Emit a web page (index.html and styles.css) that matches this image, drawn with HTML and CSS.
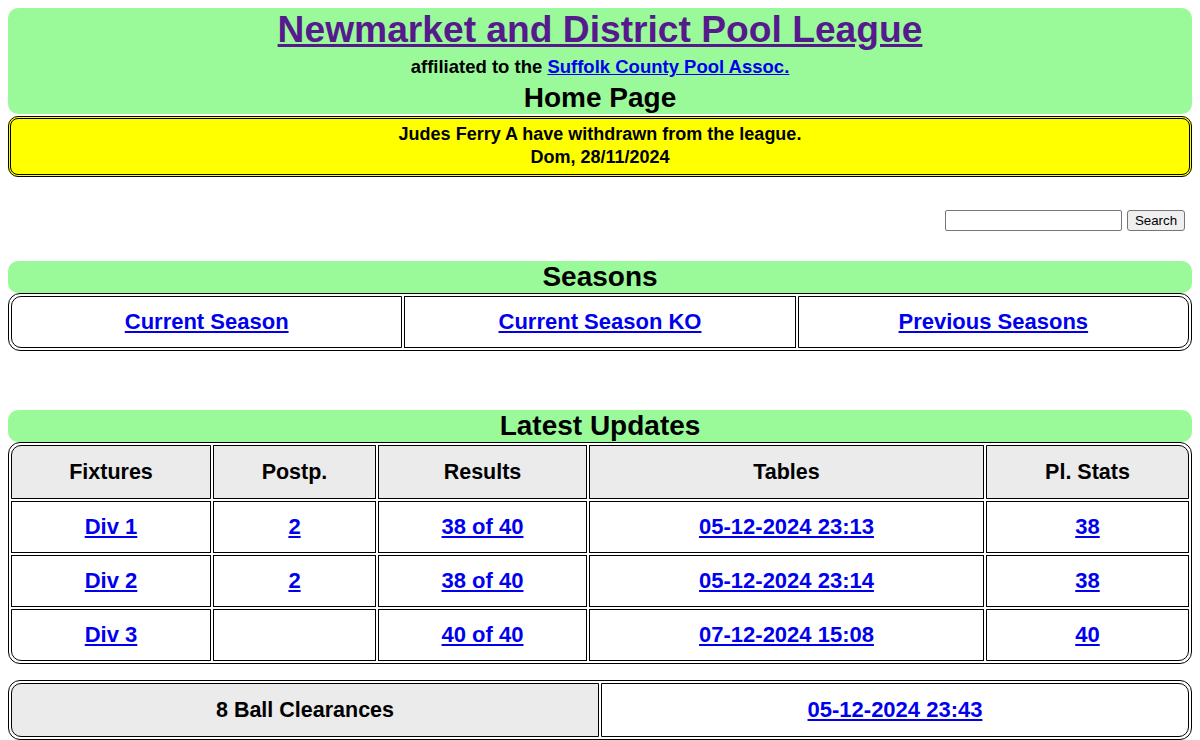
FILE: index.html
```html
<!DOCTYPE html>
<html>
<head>
<meta charset="utf-8">
<title>Newmarket and District Pool League</title>
<link rel="stylesheet" href="styles.css">
</head>
<body>
<div class="masthead">
  <h1 class="site-title"><a class="title-link" href="#">Newmarket and District Pool League</a></h1>
  <p class="affil">affiliated to the <a class="link" href="#">Suffolk County Pool Assoc.</a></p>
  <h2 class="page-name">Home Page</h2>
</div>
<div class="notice">
  <div class="notice-line">Judes Ferry A have withdrawn from the league.</div>
  <div class="notice-line">Dom, 28/11/2024</div>
</div>
<form class="search">
  <input class="search-input" type="text">
  <button class="search-btn" type="button">Search</button>
</form>

<div class="bar bar-seasons">Seasons</div>
<table class="grid">
  <tr>
    <td class="cell cell-third cell-tl cell-bl"><a class="link" href="#">Current Season</a></td>
    <td class="cell cell-third"><a class="link" href="#">Current Season KO</a></td>
    <td class="cell cell-third cell-tr cell-br"><a class="link" href="#">Previous Seasons</a></td>
  </tr>
</table>

<div class="bar bar-updates">Latest Updates</div>
<table class="grid">
  <tr>
    <th class="cell head w1 cell-tl">Fixtures</th>
    <th class="cell head w2">Postp.</th>
    <th class="cell head w3">Results</th>
    <th class="cell head w4">Tables</th>
    <th class="cell head w5 cell-tr">Pl. Stats</th>
  </tr>
  <tr>
    <td class="cell"><a class="link" href="#">Div 1</a></td>
    <td class="cell"><a class="link" href="#">2</a></td>
    <td class="cell"><a class="link" href="#">38 of 40</a></td>
    <td class="cell"><a class="link" href="#">05-12-2024 23:13</a></td>
    <td class="cell"><a class="link" href="#">38</a></td>
  </tr>
  <tr>
    <td class="cell"><a class="link" href="#">Div 2</a></td>
    <td class="cell"><a class="link" href="#">2</a></td>
    <td class="cell"><a class="link" href="#">38 of 40</a></td>
    <td class="cell"><a class="link" href="#">05-12-2024 23:14</a></td>
    <td class="cell"><a class="link" href="#">38</a></td>
  </tr>
  <tr>
    <td class="cell cell-bl"><a class="link" href="#">Div 3</a></td>
    <td class="cell"></td>
    <td class="cell"><a class="link" href="#">40 of 40</a></td>
    <td class="cell"><a class="link" href="#">07-12-2024 15:08</a></td>
    <td class="cell cell-br"><a class="link" href="#">40</a></td>
  </tr>
</table>

<table class="grid grid-clear">
  <tr>
    <th class="cell head cell-half cell-tl cell-bl">8 Ball Clearances</th>
    <td class="cell cell-half cell-tr cell-br cell-tall"><a class="link" href="#">05-12-2024 23:43</a></td>
  </tr>
</table>
</body>
</html>
```
FILE: styles.css
```css
html, body {
  margin: 0;
  padding: 0;
}
body {
  margin: 8px;
  font-family: "Liberation Sans", Arial, sans-serif;
  color: #000;
  background: #fff;
}
.masthead {
  background: #9afa9a;
  border-radius: 10px;
  text-align: center;
  height: 106px;
}
.site-title {
  margin: 0;
  font-size: 37.2px;
  line-height: 42px;
  font-weight: bold;
}
.title-link {
  color: #551a8b;
}
.affil {
  margin: 6px 0 0;
  font-size: 18.5px;
  line-height: 22px;
  font-weight: bold;
}
.page-name {
  margin: 4px 0 0;
  font-size: 28px;
  line-height: 32px;
  font-weight: bold;
}
.link {
  color: #0000ee;
}
.notice {
  margin-top: 2px;
  background: #ffff00;
  border: 3px double #000;
  border-radius: 10px;
  text-align: center;
  font-weight: bold;
  font-size: 18px;
  line-height: 23px;
  padding: 4px 0 5px;
}
.search {
  margin: 33px 0 0;
  display: flex;
  justify-content: flex-end;
  align-items: center;
  gap: 5px;
  padding-right: 7px;
}
.search-input {
  box-sizing: border-box;
  width: 177px;
  height: 21px;
  margin: 0;
  border: 1px solid #767676;
  border-radius: 2px;
  padding: 1px 2px;
  font-family: "Liberation Sans", Arial, sans-serif;
  font-size: 13.33px;
}
.search-btn {
  box-sizing: border-box;
  height: 21px;
  width: 58px;
  margin: 0;
  padding: 0;
  border: 1px solid #767676;
  border-radius: 3px;
  background: #efefef;
  font-family: "Liberation Sans", Arial, sans-serif;
  font-size: 13.33px;
  color: #000;
}
.bar {
  background: #9afa9a;
  border-radius: 10px;
  text-align: center;
  font-weight: bold;
  font-size: 28px;
  line-height: 32px;
  height: 32px;
}
.bar-seasons {
  margin-top: 30px;
}
.bar-updates {
  margin-top: 59px;
}
.grid {
  width: 100%;
  table-layout: fixed;
  border-collapse: separate;
  border-spacing: 2px;
  border: 1px solid #000;
  border-radius: 12px;
  background: #fff;
}
.grid-clear {
  margin-top: 16px;
}
.cell {
  box-sizing: border-box;
  border: 1px solid #000;
  text-align: center;
  font-weight: bold;
  font-size: 22px;
  line-height: 26px;
  padding: 12px 4px;
}
.head {
  background: #ebebeb;
  padding: 13px 4px;
  font-size: 21.5px;
}
.cell-tall {
  padding: 13px 4px;
}
.cell-tl { border-top-left-radius: 10px; }
.cell-tr { border-top-right-radius: 10px; }
.cell-bl { border-bottom-left-radius: 10px; }
.cell-br { border-bottom-right-radius: 10px; }
.cell-third { width: 33.33%; }
.cell-half { width: 50%; }
.w1 { width: 200px; }
.w2 { width: 163px; }
.w3 { width: 209px; }
.w4 { width: 395px; }
.w5 { width: 203px; }
```
